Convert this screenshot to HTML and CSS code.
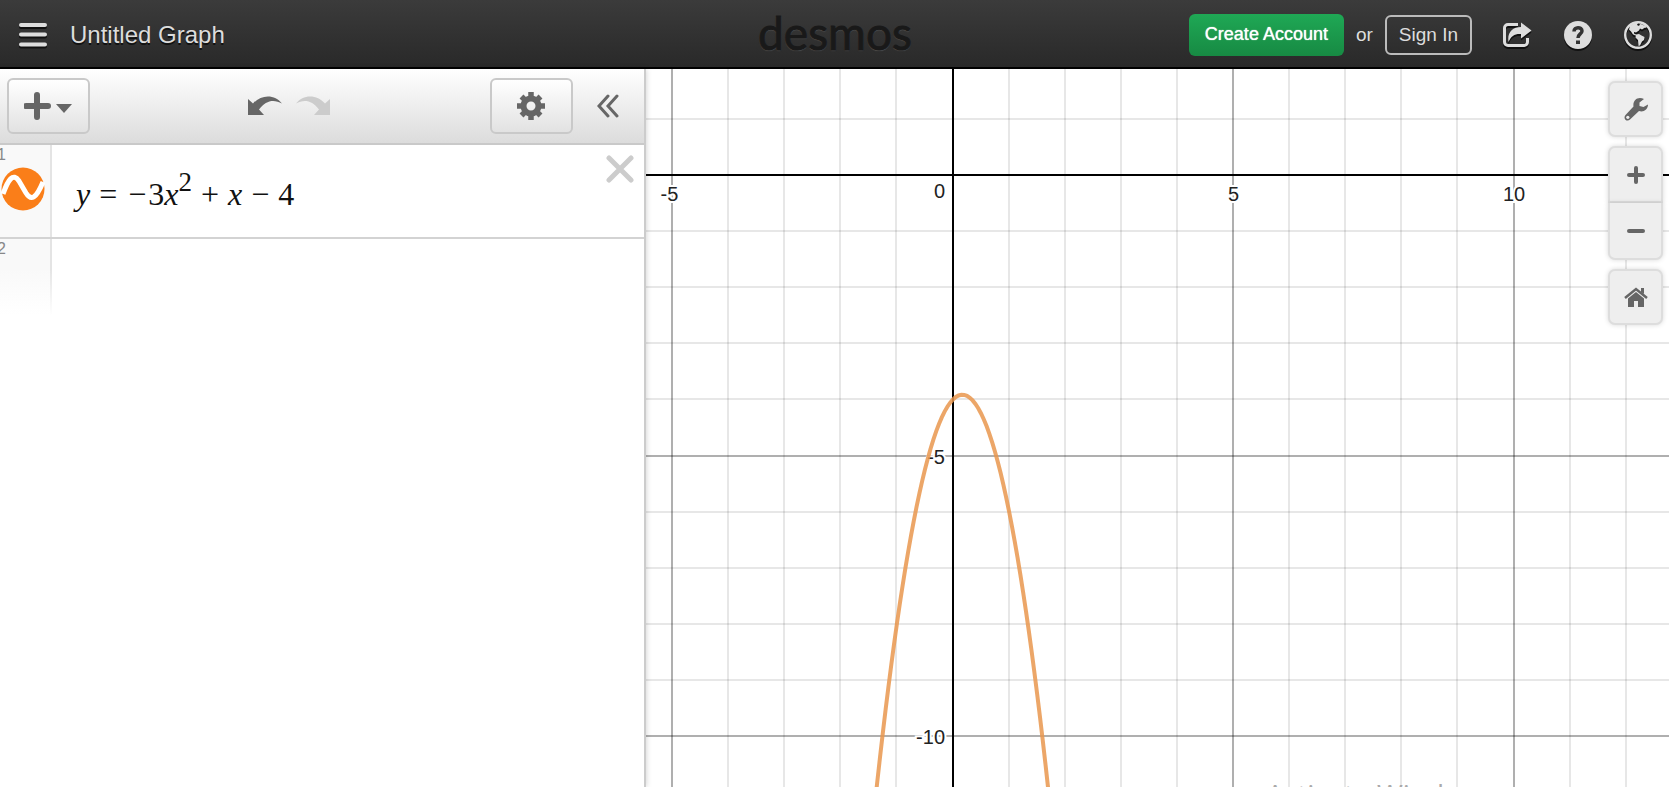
FILE: index.html
```html
<!DOCTYPE html>
<html lang="en">
<head>
    <meta charset="utf-8">
    <title>Untitled Graph</title>
    <link rel="stylesheet" href="styles.css">
</head>
<body>
    <header class="header">
        <div class="header-left">
            <button class="icon-button" aria-label="Menu">
                <svg class="icon" width="30" height="28" viewBox="0 0 30 28"><path d="M3 4h24M3 13.500h24M3 23.500h24" stroke="currentColor" stroke-width="4" stroke-linecap="round"/></svg>
            </button>
            <h1 class="graph-title">Untitled Graph</h1>
        </div>
        <a href="#" class="logo">desmos</a>
        <div class="header-right">
            <button class="button create">Create Account</button>
            <span class="or">or</span>
            <button class="button sign-in">Sign In</button>
            <div class="header-icons">
                <button class="icon-button" aria-label="Share">
                    <svg class="icon" width="30" height="28" viewBox="0 0 30 28">
                        <path d="M16 3.500H6A3.500 3.500 0 0 0 2.500 7v14A3.500 3.500 0 0 0 6 24.500h16a3.500 3.500 0 0 0 3.500-3.500v-4" fill="none" stroke="currentColor" stroke-width="3"/>
                        <path d="M19 1.500L29.500 9.500 19 17.500v-4.500c-6-.5-10 2-12.500 8C5 12 10 6 19 6z" fill="currentColor"/>
                    </svg>
                </button>
                <button class="icon-button" aria-label="Help">
                    <svg class="icon" width="28" height="28" viewBox="0 0 28 28">
                        <circle cx="14" cy="14" r="14" fill="currentColor"/>
                        <path d="M10 10.500c0-5 8-5 8-.5 0 3-4 3-4 7" fill="none" stroke="#333" stroke-width="3.500"/>
                        <path d="M12 19.500h4v3.500h-4z" fill="#333"/>
                    </svg>
                </button>
                <button class="icon-button" aria-label="Language">
                    <svg class="icon" width="28" height="28" viewBox="0 0 28 28">
                        <circle cx="14" cy="14" r="12.800" fill="none" stroke="currentColor" stroke-width="2.400"/>
                        <path d="M6 5l4-3h4l-1 2 2 1 1-2 3 .5 2 3-3 2-2-1-1 2-3 2-2-.5v1.500l2 1v1l-3-1-2-3-2-2z" fill="currentColor"/>
                        <path d="M12 13.500l3-.5 2.500 1.500 3 1.500-.5 3-2 1.500-2 4-1.500.5-.5-6-2.500-2.500z" fill="currentColor"/>
                        <path d="M19 3l4 3-2 1-1-1z" fill="currentColor"/>
                    </svg>
                </button>
            </div>
        </div>
    </header>

    <main class="main">
        <section class="panel">
            <div class="toolbar">
                <button class="tool-button" aria-label="Add item">
                    <svg width="50" height="30" viewBox="0 0 50 30"><path d="M13 4v22M2 15h22" stroke="currentColor" stroke-width="6" stroke-linecap="round"/><path d="M32 13h16l-8 9z" fill="currentColor"/></svg>
                </button>
                <div class="history">
                    <button class="icon-button" aria-label="Undo">
                        <svg width="34" height="20" viewBox="0 0 34 20"><path d="M0 3l5 4.500C13-2 27-2 34 7.500 26 3 18 4 11 13.500l5 5.500H0z" fill="currentColor"/></svg>
                    </button>
                    <button class="icon-button redo" aria-label="Redo" disabled>
                        <svg width="34" height="20" viewBox="0 0 34 20"><path d="M34 3l-5 4.500C21-2 7-2 0 7.500 8 3 16 4 23 13.500L18 19h16z" fill="currentColor"/></svg>
                    </button>
                </div>
                <button class="tool-button" aria-label="Edit list">
                    <svg width="28" height="28" viewBox="0 0 28 28">
                        <circle cx="14" cy="14" r="7.500" fill="none" stroke="currentColor" stroke-width="6"/>
                        <path d="M14 0v5M14 23v5M0 14h5M23 14h5M4.500 4.500l3 3M20.500 20.500l3 3M4.500 23.500l3-3M20.500 7.500l3-3" stroke="currentColor" stroke-width="5.500"/>
                    </svg>
                </button>
                <button class="icon-button collapse" aria-label="Hide list">
                    <svg width="22" height="24" viewBox="0 0 22 24"><path d="M11 2L2 12l9 10M20 2l-9 10 9 10" fill="none" stroke="currentColor" stroke-width="3" stroke-linecap="round"/></svg>
                </button>
            </div>
            <div class="expression">
                <div class="gutter">
                    <span class="number">1</span>
                    <button class="icon-button" aria-label="Hide graph">
                        <svg width="44" height="44" viewBox="0 0 44 44">
                            <circle cx="22" cy="22" r="21.500" fill="#fa7e19"/>
                            <path d="M2 27C7 13 12 5 18 14l7 12c5 8 10 6 17-11" fill="none" stroke="#fff" stroke-width="5"/>
                        </svg>
                    </button>
                </div>
                <div class="formula"><i>y</i><span class="equals">=</span><span class="negative">−</span>3<i>x</i><sup>2</sup><span class="operator">+</span><i>x</i><span class="operator">−</span>4</div>
                <button class="icon-button delete" aria-label="Delete expression">
                    <svg width="28" height="28" viewBox="0 0 28 28"><path d="M3 3l22 22M25 3L3 25" stroke="currentColor" stroke-width="5" stroke-linecap="round"/></svg>
                </button>
            </div>
            <div class="expression empty">
                <div class="gutter"><span class="number">2</span></div>
            </div>
        </section>

        <section class="graph">
            <svg id="plot" class="plot" role="img" aria-label="Graph of y = -3x^2 + x - 4"></svg>
            <div class="graph-tools">
                <button class="graph-button" aria-label="Graph settings">
                    <svg width="26" height="26" viewBox="0 0 26 26">
                        <path d="M21 3l-4.500 3.500 0 3.500 4 1L25 8.500c0 5-4.500 8-9 6.500L7 23.500c-3 3-7.500-1-4.500-4.500L10.500 10.500C9.500 4 15 0 21 3z" fill="currentColor"/>
                        <circle cx="4.800" cy="21.300" r="1.600" fill="#eee"/>
                    </svg>
                </button>
                <div class="zoom">
                    <button class="graph-button" aria-label="Zoom in">
                        <svg width="18" height="18" viewBox="0 0 18 18"><path d="M9 2v14M2 9h14" stroke="currentColor" stroke-width="4" stroke-linecap="round"/></svg>
                    </button>
                    <button class="graph-button" aria-label="Zoom out">
                        <svg width="18" height="18" viewBox="0 0 18 18"><path d="M2 9h14" stroke="currentColor" stroke-width="4" stroke-linecap="round"/></svg>
                    </button>
                </div>
                <button class="graph-button" aria-label="Default view">
                    <svg width="24" height="20" viewBox="0 0 24 20">
                        <path d="M1 11L12 2l11 9" fill="none" stroke="currentColor" stroke-width="2.500"/>
                        <path d="M17 1h3v6l-3-2zM4 11.500l8-6.500 8 6.500V20h-6v-6h-4v6H4z" fill="currentColor"/>
                    </svg>
                </button>
            </div>
            <div class="watermark">Activate Windows</div>
        </section>
    </main>

    <script src="script.js"></script>
</body>
</html>
```
FILE: styles.css
```css
* {
    box-sizing: border-box;
}
body {
    font-family: Arial, "Liberation Sans", sans-serif;
    margin: 0;
    height: 100vh;
    display: flex;
    flex-direction: column;
    overflow: hidden;
    background-color: #fff;
}
button {
    font-family: inherit;
    cursor: pointer;
}
svg {
    display: block;
}
.header {
    display: grid;
    grid-template-columns: 1fr auto 1fr;
    align-items: center;
    height: 69px;
    padding: 2px 17px 0 18px;
    border-bottom: 2px solid #000;
    background: linear-gradient(#3b3b3b, #292929);
    color: #ddd;
}
.header-left {
    display: flex;
    align-items: center;
    gap: 22px;
}
.icon-button {
    display: flex;
    padding: 0;
    border: none;
    background: none;
    color: inherit;
}
.icon {
    filter: drop-shadow(0 2px 0 #111);
}
.graph-title {
    margin: 0;
    font-size: 24px;
    font-weight: normal;
    text-shadow: 0 2px 0 #111;
}
.logo {
    font-family: Lato, sans-serif;
    font-size: 46px;
    line-height: 56px;
    margin-bottom: 4px;
    color: #191919;
    text-decoration: none;
    -webkit-text-stroke: 1px #191919;
    text-shadow: 0 1px 1px #555;
}
.header-right {
    display: flex;
    align-items: center;
    justify-content: flex-end;
    gap: 12px;
    font-size: 19px;
}
.button {
    font-size: 19px;
    border-radius: 6px;
}
.create {
    height: 42px;
    padding: 0 16px;
    border: none;
    background: linear-gradient(#1fa855, #178a43);
    color: #fff;
    font-size: 18px;
    text-shadow: 0 0 1px #fff;
}
.sign-in {
    height: 40px;
    padding: 0 12px;
    border: 2px solid #bbb;
    background: none;
    color: #ddd;
}
.header-icons {
    display: flex;
    gap: 32px;
    margin-left: 18px;
}
.main {
    flex: 1;
    display: flex;
    min-height: 0;
}
.panel {
    flex: 0 0 38.7%;
    border-right: 2px solid #ccc;
    box-shadow: 0 0 6px rgba(0, 0, 0, 0.2);
    background-color: #fff;
    z-index: 1;
}
.toolbar {
    display: flex;
    align-items: center;
    height: 76px;
    padding: 0 25px 0 7px;
    border-bottom: 2px solid #c9c9c9;
    background: linear-gradient(#fff, #dcdcdc);
    color: #666;
}
.tool-button {
    display: flex;
    align-items: center;
    justify-content: center;
    width: 83px;
    height: 56px;
    padding: 0;
    border: 2px solid #c9c9c9;
    border-radius: 6px;
    background: linear-gradient(#fff, #e2e2e2);
    color: inherit;
}
.history {
    flex: 1;
    display: flex;
    justify-content: center;
    gap: 14px;
    padding-right: 2px;
}
.redo {
    color: #ccc;
}
.collapse {
    margin-left: 24px;
}
.expression {
    display: flex;
    height: 94px;
    border-bottom: 2px solid #d3d3d3;
}
.gutter {
    width: 52px;
    border-right: 2px solid #e4e4e4;
    background-color: #f9f9f9;
}
.number {
    display: block;
    margin-left: -3px;
    font-size: 16px;
    line-height: 20px;
    color: #888;
}
.gutter .icon-button {
    margin: 2px 0 0 1px;
}
.formula {
    flex: 1;
    padding: 31px 0 0 24px;
    font-family: "Liberation Serif", serif;
    font-size: 32px;
    line-height: 36px;
    color: #111;
    white-space: nowrap;
}
.formula sup {
    font-size: 27px;
    line-height: 0;
    vertical-align: 14px;
}
.equals {
    margin: 0 11px 0 9px;
}
.negative {
    margin-right: 2px;
}
.operator {
    margin: 0 9px;
}
.delete {
    align-self: flex-start;
    margin: 10px 10px 0 0;
    color: #ccc;
}
.empty {
    height: 76px;
    border-bottom: none;
}
.empty .gutter {
    border-image: linear-gradient(#e4e4e4 40%, #fff) 1;
    background: linear-gradient(#f9f9f9 40%, #fff);
}
.graph {
    flex: 1;
    position: relative;
    overflow: hidden;
}
.plot {
    width: 100%;
    height: 100%;
    font-size: 20px;
}
.grid {
    stroke: #000;
    stroke-opacity: 0.13;
    stroke-width: 1.5;
}
.grid-major {
    stroke: #000;
    stroke-opacity: 0.42;
    stroke-width: 1.5;
}
.axis {
    stroke: #000;
    stroke-width: 2;
}
.label {
    fill: #222;
    stroke: #fff;
    stroke-width: 4;
    paint-order: stroke;
}
.curve {
    fill: none;
    stroke: #e9964e;
    stroke-opacity: 0.85;
    stroke-width: 4;
}
.graph-tools {
    position: absolute;
    top: 12px;
    right: 6px;
    display: flex;
    flex-direction: column;
    gap: 9px;
}
.graph-button {
    display: flex;
    align-items: center;
    justify-content: center;
    width: 55px;
    height: 56px;
    padding: 0;
    border: 2px solid #ddd;
    border-radius: 7px;
    background-color: #eee;
    color: #666;
    box-shadow: 0 0 5px rgba(0, 0, 0, 0.15);
}
.zoom .graph-button {
    height: 57px;
}
.zoom .graph-button:first-child {
    border-radius: 7px 7px 0 0;
}
.zoom .graph-button:last-child {
    border-top: none;
    border-radius: 0 0 7px 7px;
}
.watermark {
    position: absolute;
    right: 173px;
    bottom: -26px;
    font-family: "Open Sans", sans-serif;
    font-size: 28px;
    line-height: 38px;
    color: #aaa;
}
```
FILE: script.js
```js
const plot = document.getElementById('plot');
const unit = 56.1;

function add(tag, attrs, text) {
    const el = document.createElementNS('http://www.w3.org/2000/svg', tag);
    for (const name in attrs) {
        el.setAttribute(name, attrs[name]);
    }
    if (text !== undefined) {
        el.textContent = text;
    }
    plot.appendChild(el);
}

function line(x1, y1, x2, y2, className) {
    add('line', { x1, y1, x2, y2, class: className });
}

function draw() {
    const width = plot.clientWidth;
    const height = plot.clientHeight;
    const originX = Math.round(width * 0.3);
    const originY = 106;
    const left = Math.ceil(-originX / unit);
    const right = Math.floor((width - originX) / unit);
    const top = Math.floor(originY / unit);
    const bottom = Math.ceil((originY - height) / unit);
    plot.replaceChildren();

    // Grid lines, every fifth one is darker
    for (let i = left; i <= right; i++) {
        const x = Math.floor(originX + i * unit);
        line(x, 0, x, height, i % 5 ? 'grid' : 'grid-major');
    }
    for (let i = bottom; i <= top; i++) {
        const y = Math.round(originY - i * unit);
        line(0, y, width, y, i % 5 ? 'grid' : 'grid-major');
    }
    line(originX, 0, originX, height, 'axis');
    line(0, originY, width, originY, 'axis');

    // Axis numbers
    for (let i = left; i <= right; i++) {
        if (i % 5 === 0 && i !== 0) {
            const x = originX + i * unit - (i < 0 ? 3 : 0);
            add('text', { x, y: originY + 26, 'text-anchor': 'middle', class: 'label' }, i);
        }
    }
    for (let i = bottom; i <= top; i++) {
        if (i % 5 === 0 && i !== 0) {
            add('text', { x: originX - 8, y: originY - i * unit + 8, 'text-anchor': 'end', class: 'label' }, i);
        }
    }
    add('text', { x: originX - 8, y: originY + 23, 'text-anchor': 'end', class: 'label' }, '0');

    // y = -3x^2 + x - 4
    let d = '';
    for (let x = -2; x <= 2; x += 0.05) {
        const y = -3 * x * x + x - 4;
        d += (d ? 'L' : 'M') + (originX + x * unit) + ' ' + (originY - y * unit);
    }
    add('path', { d, class: 'curve' });
}

draw();
window.addEventListener('resize', draw);
```
